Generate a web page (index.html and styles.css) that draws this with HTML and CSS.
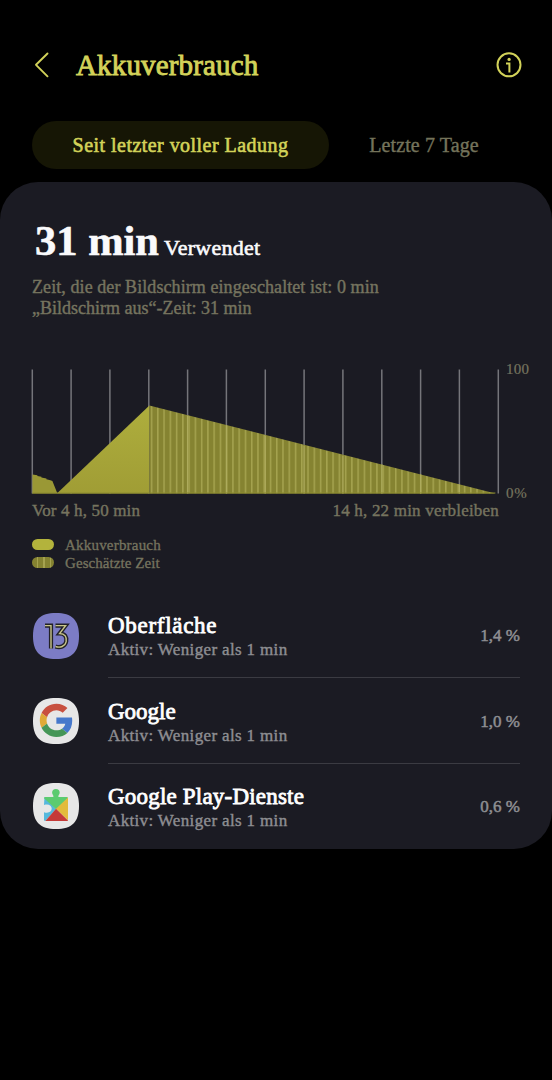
FILE: index.html
```html
<!DOCTYPE html>
<html lang="de">
<head>
<meta charset="utf-8">
<title>Akkuverbrauch</title>
<link rel="stylesheet" href="styles.css">
</head>
<body>
<header class="topbar">
  <svg class="back" viewBox="0 0 16 26"><path d="M13.5 1.5 2 12.8l11.5 11.5"/></svg>
  <h1 class="title">Akkuverbrauch</h1>
  <svg class="info" viewBox="0 0 26 26"><circle cx="13" cy="12.8" r="11.5"/><path d="M10 11.4h3.4v9"/><circle class="dot" cx="13.1" cy="7.4" r="1.6"/></svg>
</header>
<nav class="tabs">
  <div class="tab tab-active"><span class="tab-active-text">Seit letzter voller Ladung</span></div>
  <div class="tab tab-idle"><span>Letzte 7 Tage</span></div>
</nav>
<main class="card">
  <div class="headline"><span class="amount">31 min</span><span class="used">Verwendet</span></div>
  <div class="details">
    <div><span class="detail-a">Zeit, die der Bildschirm eingeschaltet ist: 0 min</span></div>
    <div><span class="detail-b">„Bildschirm aus“-Zeit: 31 min</span></div>
  </div>
  <div class="chart">
    <svg class="plot" viewBox="0.6 0.5 468 127">
      <defs>
        <linearGradient id="used" x1="0" y1="0" x2="0" y2="1"><stop offset="0" stop-color="#aeae3d"/><stop offset="1" stop-color="#a09d35"/></linearGradient>
        <pattern id="stripes" x="119.4" y="0" width="6.26" height="127" patternUnits="userSpaceOnUse"><rect width="6.26" height="127" fill="#858331"/><rect width="1.5" height="127" fill="#a5a34f"/></pattern>
      </defs>
      <path class="grid" d="M.9 1v124M39.7 1v124M78.5 1v124M117.4 1v124M156.2 1v124M195 1v124M233.9 1v124M272.7 1v124M311.5 1v124M350.4 1v124M389.2 1v124M428 1v124M466.9 1v124"/>
      <path fill="#9a9835" d="M1 125V106l5 .7v.8l4 .7v.9l5 .8v.8l4 1 2 .8 5 12.5z"/>
      <path fill="url(#used)" d="M25.5 125 118 37v88z"/>
      <path fill="url(#stripes)" d="M118 37 464 125H118z"/>
      <path class="overlay" d="M156.2 47v78M195 57v68M233.9 67v58M272.7 77v48M311.5 87v38M350.4 96v29M389.2 106v19M428 116v9"/>
      <path class="base" d="M1 124.5h463"/>
    </svg>
    <div class="scale"><span>100</span><span>0&#8202;%</span></div>
  </div>
  <div class="axis"><span class="axis-a">Vor 4 h, 50 min</span><span class="axis-b">14 h, 22 min verbleiben</span></div>
  <div class="legend">
    <div class="key"><i class="swatch"></i><span class="key-a">Akkuverbrauch</span></div>
    <div class="key"><i class="swatch swatch-striped"></i><span class="key-b">Geschätzte Zeit</span></div>
  </div>
  <ul class="apps">
    <li class="app">
      <svg class="icon" viewBox="0 0 46 46"><path fill="#7c7cc5" d="M23 0C39 0 46 7 46 23S39 46 23 46 0 39 0 23 7 0 23 0z"/><g class="numeral"><path d="M12 12.6H18V35.5M22.5 12.6H32.6L26.6 20.5C32 20.5 34 24 33.2 28.5 32.2 33.5 27 35.2 22.5 33.5"/></g><g class="numeral-core"><path d="M12 12.6H18V35.5M22.5 12.6H32.6L26.6 20.5C32 20.5 34 24 33.2 28.5 32.2 33.5 27 35.2 22.5 33.5"/></g></svg>
      <div class="body"><div class="name"><div class="name-text name-a">Oberfläche</div><div class="status">Aktiv: Weniger als 1 min</div></div><div class="share">1,4 %</div></div>
    </li>
    <li class="app">
      <svg class="icon" viewBox="0 0 46 46"><path fill="#e7e7e7" d="M23 0C39 0 46 7 46 23S39 46 23 46 0 39 0 23 7 0 23 0z"/><g transform="translate(6.8 5.8) scale(.69)"><path fill="#c8503f" d="M24 9.5c3.54 0 6.71 1.22 9.21 3.6l6.85-6.85C35.9 2.38 30.47 0 24 0 14.62 0 6.51 5.38 2.56 13.22l7.98 6.19C12.43 13.72 17.74 9.5 24 9.5z"/><path fill="#4678cb" d="M46.98 24.55c0-1.57-.15-3.09-.38-4.55H24v9.02h12.94c-.58 2.96-2.26 5.48-4.78 7.18l7.73 6c4.51-4.18 7.09-10.36 7.09-17.65z"/><path fill="#dfaa37" d="M10.53 28.59c-.48-1.45-.76-2.99-.76-4.59s.27-3.14.76-4.59l-7.98-6.19C.92 16.46 0 20.12 0 24c0 3.88.92 7.54 2.56 10.78l7.97-6.19z"/><path fill="#459657" d="M24 48c6.48 0 11.93-2.13 15.89-5.81l-7.73-6c-2.15 1.45-4.92 2.3-8.16 2.3-6.26 0-11.57-4.22-13.47-9.91l-7.98 6.19C6.51 42.62 14.62 48 24 48z"/></g></svg>
      <div class="body"><div class="name"><div class="name-text name-b">Google</div><div class="status">Aktiv: Weniger als 1 min</div></div><div class="share">1,0 %</div></div>
    </li>
    <li class="app">
      <svg class="icon" viewBox="0 0 46 46"><path fill="#e7e7e7" d="M23 0C39 0 46 7 46 23S39 46 23 46 0 39 0 23 7 0 23 0z"/><path fill="#55b8dc" d="M11.5 14 23 26 12.3 38q-1.3 0-1.3-1.3V29.2c4.5 1.5 7.7-.5 7.7-3.6s-3.2-5.1-7.7-3.6z"/><path fill="#5ccb70" d="M11 15.3Q11 14 12.3 14h8c.8-1.6-1.2-2.3-1.2-4.2a3.8 3.8 0 0 1 7.6 0c0 1.9-2 2.6-1.2 4.2h8.2q1.3 0 1.3 1.3L23.3 26.4z"/><path fill="#e3bb3b" d="M35 14.5V37.2L23 25.8z"/><path fill="#c53a38" d="M23 25.8 35 37.5q-.3.5-1.2.5H12.3z"/></svg>
      <div class="body"><div class="name"><div class="name-text name-c">Google Play-Dienste</div><div class="status">Aktiv: Weniger als 1 min</div></div><div class="share">0,6 %</div></div>
    </li>
  </ul>
</main>
</body>
</html>
```
FILE: styles.css
```css
* { box-sizing: border-box; }
body { margin: 0; height: 1080px; background: #000; font-family: "Liberation Serif", serif; color: #fff; overflow: hidden; white-space: nowrap; }
svg { display: block; fill: none; }
.topbar { display: flex; align-items: center; height: 121px; padding: 8px 30px 0 33.5px; }
.back { width: 16px; height: 26px; stroke: #d2d259; stroke-width: 1.9; stroke-linecap: round; stroke-linejoin: round; }
.title { margin: 0 auto 0 26.5px; font-size: 29px; line-height: 32px; font-weight: 400; color: #d2d259; -webkit-text-stroke: .9px #d2d259; letter-spacing: .15px; }
.info { width: 26px; height: 26px; stroke: #d2d259; stroke-width: 2; }
.info .dot { fill: #d2d259; stroke: none; }
.tabs { display: flex; height: 48px; padding: 0 32px; }
.tab { display: flex; align-items: center; justify-content: center; font-size: 20px; line-height: 24px; border-radius: 24px; }
.tab-active { width: 297px; background: #161605; color: #d2d259; -webkit-text-stroke: .6px #d2d259; }
.tab-active-text { letter-spacing: .46px; }
.tab-idle { width: 190px; color: #74735b; -webkit-text-stroke: .4px #74735b; letter-spacing: .12px; }
.card { margin-top: 13px; height: 667px; padding: 34px 32px 0; border-radius: 38px; background: #1b1b23; }
.headline { display: flex; align-items: baseline; gap: 5px; height: 61px; line-height: 50px; padding-left: 3px; -webkit-text-stroke: .6px #fafafc; color: #fafafc; }
.amount { font-size: 42.5px; font-weight: 700; }
.used { font-size: 22px; letter-spacing: .25px; }
.details { font-size: 18px; line-height: 21px; color: #76745f; -webkit-text-stroke: .4px #76745f; }
.detail-a { letter-spacing: .08px; }
.chart { display: flex; gap: 6px; margin-top: 50px; height: 127px; }
.plot { width: 468px; height: 127px; flex: none; overflow: visible; }
.grid { stroke: #75757a; stroke-width: 1.5; }
.overlay { stroke: #adab5c; stroke-width: 1.3; }
.base { stroke: #8d8c31; stroke-width: 1; }
.scale { display: flex; flex-direction: column; justify-content: space-between; margin: -8px 0 -5px; font-size: 15px; line-height: 16px; color: #76745f; letter-spacing: .3px; -webkit-text-stroke: .2px #76745f; }
.scale span:last-child { letter-spacing: -.2px; }
.axis { display: flex; justify-content: space-between; margin-top: 5px; width: 467px; font-size: 17px; line-height: 20px; color: #76745f; -webkit-text-stroke: .4px #76745f; }
.axis-a { letter-spacing: .14px; }
.axis-b { letter-spacing: .2px; }
.legend { margin-top: 15px; font-size: 15px; line-height: 18px; color: #76745f; -webkit-text-stroke: .3px #76745f; }
.key { display: flex; align-items: center; gap: 11px; height: 18px; }
.key-a { letter-spacing: .2px; }
.key-b { letter-spacing: .07px; }
.swatch { width: 22px; height: 11px; margin-top: -2px; border-radius: 6px; background: #b3b33c; }
.swatch-striped { background: repeating-linear-gradient(90deg, #858331 0 5px, #a5a34f 5px 6.3px); }
.apps { list-style: none; margin: 21px 0 0; padding: 0; }
.app { display: flex; align-items: center; gap: 29px; height: 85.4px; padding-left: 1px; }
.icon { width: 46px; height: 46px; flex: none; }
.numeral { stroke: #222127; stroke-width: 4.2; }
.numeral-core { stroke: #c9c68a; stroke-width: 1.4; }
.body { display: flex; align-items: center; justify-content: space-between; width: 412px; height: 85.4px; padding-top: 4px; border-bottom: 1.5px solid #3b3b42; }
.app:last-child .body { border-color: transparent; }
.name-text { font-size: 23px; line-height: 25px; -webkit-text-stroke: .8px #fff; }
.name-a { letter-spacing: .7px; }
.name-c { letter-spacing: .2px; }
.status { font-size: 17px; line-height: 23px; letter-spacing: .35px; color: #8e8e92; -webkit-text-stroke: .4px #8e8e92; }
.share { margin-top: -2px; font-size: 17px; line-height: 22px; color: #8e8e92; -webkit-text-stroke: .5px #8e8e92; }
```
